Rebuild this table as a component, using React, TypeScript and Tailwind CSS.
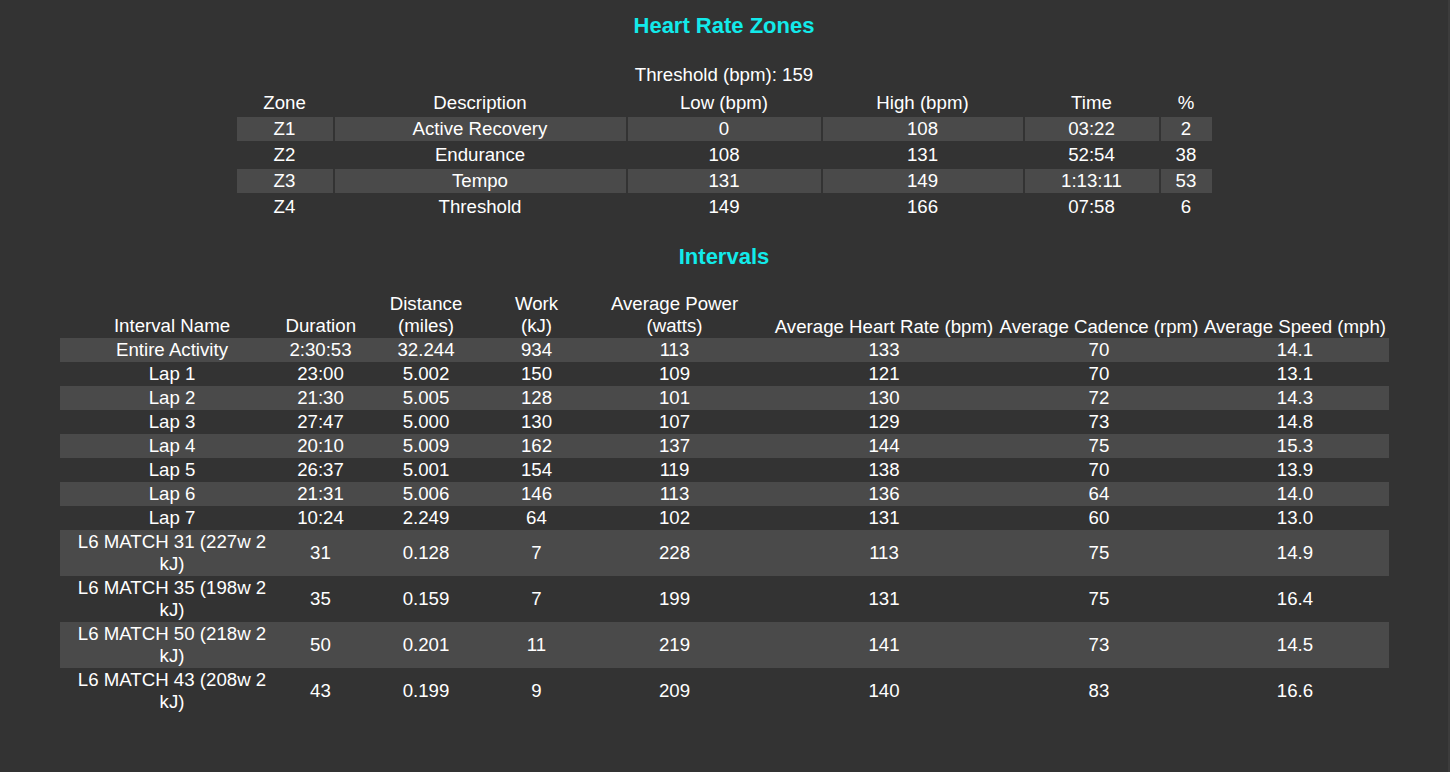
const zones = [
  { zone: "Z1", desc: "Active Recovery", low: "0", high: "108", time: "03:22", pct: "2" },
  { zone: "Z2", desc: "Endurance", low: "108", high: "131", time: "52:54", pct: "38" },
  { zone: "Z3", desc: "Tempo", low: "131", high: "149", time: "1:13:11", pct: "53" },
  { zone: "Z4", desc: "Threshold", low: "149", high: "166", time: "07:58", pct: "6" },
];

const intervals = [
  ["Entire Activity", "2:30:53", "32.244", "934", "113", "133", "70", "14.1"],
  ["Lap 1", "23:00", "5.002", "150", "109", "121", "70", "13.1"],
  ["Lap 2", "21:30", "5.005", "128", "101", "130", "72", "14.3"],
  ["Lap 3", "27:47", "5.000", "130", "107", "129", "73", "14.8"],
  ["Lap 4", "20:10", "5.009", "162", "137", "144", "75", "15.3"],
  ["Lap 5", "26:37", "5.001", "154", "119", "138", "70", "13.9"],
  ["Lap 6", "21:31", "5.006", "146", "113", "136", "64", "14.0"],
  ["Lap 7", "10:24", "2.249", "64", "102", "131", "60", "13.0"],
  ["L6 MATCH 31 (227w 2 kJ)", "31", "0.128", "7", "228", "113", "75", "14.9"],
  ["L6 MATCH 35 (198w 2 kJ)", "35", "0.159", "7", "199", "131", "75", "16.4"],
  ["L6 MATCH 50 (218w 2 kJ)", "50", "0.201", "11", "219", "141", "73", "14.5"],
  ["L6 MATCH 43 (208w 2 kJ)", "43", "0.199", "9", "209", "140", "83", "16.6"],
];

const zoneCols = ["w-[96px]", "w-[291px]", "w-[193px]", "w-[200px]", "w-[134px]", "w-[51px]"];
const intervalCols = [
  "w-[225px]",
  "w-[72px]",
  "w-[139px]",
  "w-[82px]",
  "w-[194px]",
  "w-[225px]",
  "w-[205px]",
  "w-[187px]",
];

function HeartRateZones() {
  return (
    <section>
      <h3 className="pt-[13px] text-center text-[22px] font-bold leading-[25px] text-[#12eaea]">
        Heart Rate Zones
      </h3>
      <div className="mt-[26px] text-center leading-[22px]">Threshold (bpm): 159</div>
      <table className="mx-auto mt-[3px] table-fixed border-separate border-spacing-[2px]">
        <colgroup>
          {zoneCols.map((c, i) => (
            <col key={i} className={c} />
          ))}
        </colgroup>
        <thead>
          <tr>
            {["Zone", "Description", "Low (bpm)", "High (bpm)", "Time", "%"].map((h) => (
              <th key={h} className="p-px font-normal leading-[22px]">
                {h}
              </th>
            ))}
          </tr>
        </thead>
        <tbody>
          {zones.map((z, i) => (
            <tr key={z.zone} className={i % 2 === 0 ? "bg-[#4a4a4a]" : ""}>
              {[z.zone, z.desc, z.low, z.high, z.time, z.pct].map((v, j) => (
                <td key={j} className="p-px text-center leading-[22px]">
                  {v}
                </td>
              ))}
            </tr>
          ))}
        </tbody>
      </table>
    </section>
  );
}

function Intervals() {
  return (
    <section>
      <h3 className="mt-[23px] text-center text-[22px] font-bold leading-[25px] text-[#12eaea]">
        Intervals
      </h3>
      <table className="mx-auto mt-[23px] w-[1329px] table-fixed border-collapse">
        <colgroup>
          {intervalCols.map((c, i) => (
            <col key={i} className={c} />
          ))}
        </colgroup>
        <thead>
          <tr className="align-bottom">
            <th className="p-px font-normal leading-[22px]">Interval Name</th>
            <th className="p-px font-normal leading-[22px]">Duration</th>
            <th className="p-px font-normal leading-[22px]">
              Distance
              <br />
              (miles)
            </th>
            <th className="p-px font-normal leading-[22px]">
              Work
              <br />
              (kJ)
            </th>
            <th className="p-px font-normal leading-[22px]">
              Average Power
              <br />
              (watts)
            </th>
            <th className="whitespace-nowrap p-0 font-normal leading-[22px]">
              Average Heart Rate (bpm)
            </th>
            <th className="whitespace-nowrap p-0 font-normal leading-[22px]">
              Average Cadence (rpm)
            </th>
            <th className="whitespace-nowrap p-0 font-normal leading-[22px]">
              Average Speed (mph)
            </th>
          </tr>
        </thead>
        <tbody>
          {intervals.map((row, i) => (
            <tr key={row[0]} className={i % 2 === 0 ? "bg-[#4a4a4a]" : ""}>
              {row.map((v, j) => (
                <td
                  key={j}
                  className={
                    j === 0
                      ? "px-[6px] py-px text-center leading-[22px]"
                      : "p-px text-center leading-[22px]"
                  }
                >
                  {v}
                </td>
              ))}
            </tr>
          ))}
        </tbody>
      </table>
    </section>
  );
}

export default function App() {
  return (
    <div className="min-h-screen border-r-2 border-[#3c3c3c] bg-[#333333] font-['Liberation_Sans',Arial,sans-serif] text-[18.67px] text-white">
      <HeartRateZones />
      <Intervals />
    </div>
  );
}
